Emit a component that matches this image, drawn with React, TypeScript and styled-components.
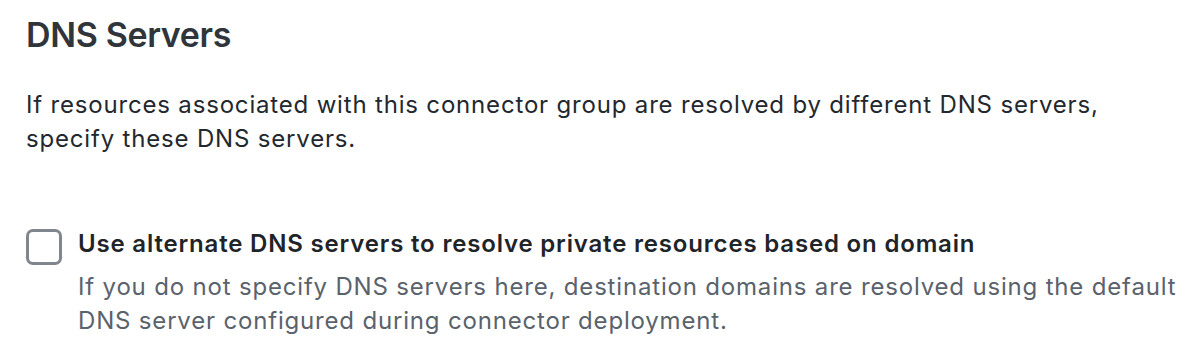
import styled, { createGlobalStyle } from "styled-components";

const GlobalStyle = createGlobalStyle`
  html, body {
    margin: 0;
    padding: 0;
    background: #ffffff;
  }
  body {
    font-family: Inter, "Noto Sans", sans-serif;
    -webkit-font-smoothing: antialiased;
  }
`;

const Section = styled.section`
  width: 1200px;
  height: 360px;
  box-sizing: border-box;
  padding: 15px 20px 0 26px;
  overflow: hidden;
`;

const Title = styled.h2`
  margin: 0;
  font-size: 34px;
  font-weight: 600;
  line-height: 40px;
  letter-spacing: -0.35px;
  color: #30353b;
`;

const Intro = styled.p`
  margin: 33px 0 0;
  font-size: 24px;
  font-weight: 400;
  line-height: 34px;
  letter-spacing: 0.82px;
  white-space: nowrap;
  color: #23282e;
`;

const OptionRow = styled.label`
  display: flex;
  align-items: flex-start;
  gap: 16px;
  margin-top: 71px;
  cursor: pointer;
`;

const Box = styled.span<{ $checked: boolean }>`
  flex: none;
  width: 36px;
  height: 36px;
  box-sizing: border-box;
  border: 3px solid #80868e;
  border-radius: 7px;
  background: ${(p) => (p.$checked ? "#1d6fd6" : "#ffffff")};
  margin-top: 2px;
`;

const OptionText = styled.div`
  display: flex;
  flex-direction: column;
  letter-spacing: 0.82px;
  white-space: nowrap;
`;

const OptionLabel = styled.span`
  font-size: 24px;
  font-weight: 600;
  line-height: 34px;
  color: #1f2429;
`;

const OptionHelp = styled.span`
  margin-top: 9px;
  font-size: 24px;
  font-weight: 400;
  line-height: 34px;
  color: #5a626c;
`;

export default function App() {
  return (
    <>
      <GlobalStyle />
      <Section>
        <Title>DNS Servers</Title>
        <Intro>
          If resources associated with this connector group are resolved by different DNS servers,
          <br />
          specify these DNS servers.
        </Intro>
        <OptionRow>
          <Box $checked={false} />
          <OptionText>
            <OptionLabel>Use alternate DNS servers to resolve private resources based on domain</OptionLabel>
            <OptionHelp>
              If you do not specify DNS servers here, destination domains are resolved using the default
              <br />
              DNS server configured during connector deployment.
            </OptionHelp>
          </OptionText>
        </OptionRow>
      </Section>
    </>
  );
}
